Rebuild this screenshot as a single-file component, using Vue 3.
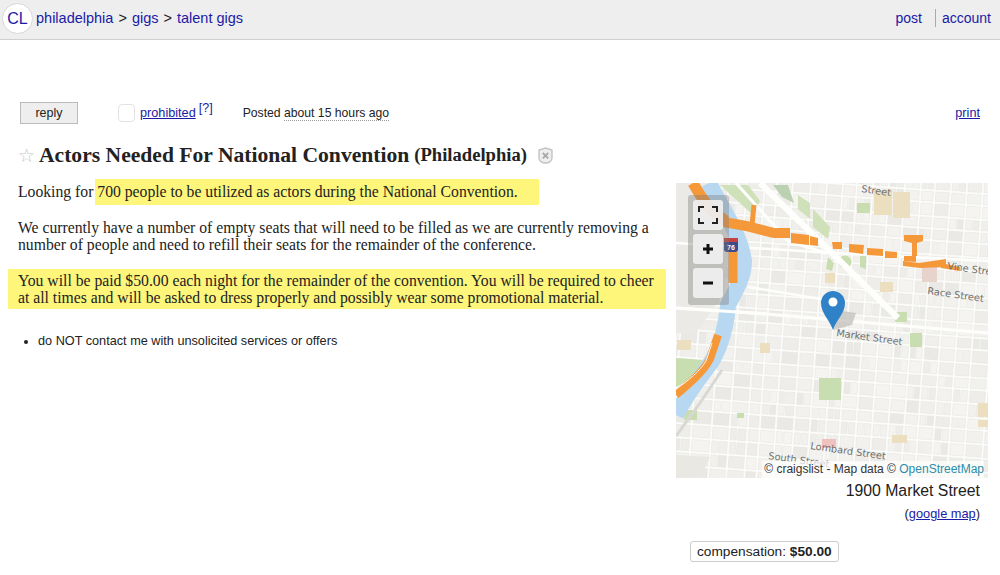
<script setup>
const xs = [-40,-18,6,24,44,62,80,92,108,126,142,158,172,188,204,220,236,250,266,282,298,316,334]
const ys = [-30,-14,2,14,28,40,52,66,80,92,106,118,132,146,158,172,186,198,212,226,238,252,266,280,294,310]
const tones = ['#f3f2ef','#f0efec','#f5f4f1','#eeede9','#f2f1ed','#eae9e5']
const blocks = []
let seed = 7
const rnd = () => { seed = (seed * 16807) % 2147483647; return seed / 2147483647 }
for (let i = 0; i < xs.length - 1; i++) {
  for (let j = 0; j < ys.length - 1; j++) {
    const w = xs[i + 1] - xs[i] - 2.5
    const h = ys[j + 1] - ys[j] - 2.5
    const fill = tones[Math.floor(rnd() * tones.length)]
    if (rnd() < 0.35 && w > 10) {
      const a = Math.floor(w * 0.45)
      blocks.push({ x: xs[i], y: ys[j], w: a, h, fill })
      blocks.push({ x: xs[i] + a + 1.2, y: ys[j], w: w - a - 1.2, h, fill: tones[Math.floor(rnd() * tones.length)] })
    } else {
      blocks.push({ x: xs[i], y: ys[j], w, h, fill })
    }
  }
}
const tan = [[198,7,18,25],[217,9,17,26],[149,90,10,10],[204,99,13,10],[1,157,14,10],[84,160,10,10],[302,220,10,14],[302,237,10,7],[216,252,15,8]]
const green = [[143,195,22,22],[61,230,7,5],[181,20,13,10],[219,129,12,10],[234,150,12,14],[8,227,13,10]]
</script>

<template>
  <div class="page">
    <header class="top">
      <nav class="crumbs">
        <span class="logo">CL</span>
        <a class="nav">philadelphia</a><span class="sep">&gt;</span>
        <a class="nav">gigs</a><span class="sep">&gt;</span>
        <a class="nav">talent gigs</a>
      </nav>
      <nav class="user">
        <a class="nav">post</a>
        <a class="nav acct">account</a>
      </nav>
    </header>

    <div class="tools">
      <button class="reply">reply</button>
      <span class="check"></span>
      <a class="link proh">prohibited</a>
      <sup class="help">[?]</sup>
      <span class="posted">Posted <span class="ago">about 15 hours ago</span></span>
      <a class="link print">print</a>
    </div>

    <h1 class="title">
      <span class="star">☆</span>
      <span>Actors Needed For National Convention</span>
      <small>(Philadelphia)</small>
      <svg class="hide" width="17" height="17" viewBox="0 0 17 17">
        <path d="M8.500 1 L15 3 V11 C15 14 12 16 8.500 16 C5 16 2 14 2 11 V3 Z" fill="#eeeeee" stroke="#c4c4c4" stroke-width="1.400"/>
        <path d="M5.800 6 L11.200 11.400 M11.200 6 L5.800 11.400" stroke="#a9a9a9" stroke-width="1.800" fill="none"/>
      </svg>
    </h1>

    <main class="content">
      <section class="posting">
        <p class="first">Looking for <mark class="hl-inline">700 people to be utilized as actors during the National Convention.</mark></p>
        <p>We currently have a number of empty seats that will need to be filled as we are currently removing a<br>number of people and need to refill their seats for the remainder of the conference.</p>
        <p class="hl-block">You will be paid $50.00 each night for the remainder of the convention. You will be required to cheer<br>at all times and will be asked to dress properly and possibly wear some promotional material.</p>
        <ul class="notices"><li>do NOT contact me with unsolicited services or offers</li></ul>
      </section>

      <aside class="side">
        <div class="map">
          <svg class="tiles" width="312" height="295" viewBox="0 0 312 295">
            <rect width="312" height="295" fill="#fcfcfb"/>
            <g transform="rotate(4 156 147)">
              <rect v-for="(b, i) in blocks" :key="i" :x="b.x" :y="b.y" :width="b.w" :height="b.h" :fill="b.fill" stroke="#e4e3de" stroke-width=".5"/>
            </g>
            <rect v-for="(t, i) in tan" :key="'t' + i" :x="t[0]" :y="t[1]" :width="t[2]" :height="t[3]" fill="#ecdfc0"/>
            <rect v-for="(g, i) in green" :key="'g' + i" :x="g[0]" :y="g[1]" :width="g[2]" :height="g[3]" fill="#c9deb0"/>
            <!-- west bank and parks -->
            <path d="M0 0 H30 L56 40 L48 110 L20 150 H0 Z" fill="#ebeae6"/>
            <path d="M0 295 L0 272 L34 274 L24 295 Z" fill="#e9e8e3"/>
            <path d="M0 175 L27 177 L12 198 L0 204 Z" fill="#c9deb0"/>
            <path d="M44 2 H72 L84 18 L77 32 Z M122 12 L134 20 L134 36 L122 26 Z M137 26 L154 44 L152 56 L137 44 Z" fill="#cfe1b8"/>
            <path d="M97 2 H112 L118 20 L106 14 Z" fill="#bcd1b2"/>
            <circle cx="169" cy="79" r="6.500" fill="#c9deb0"/>
            <path d="M152 74 L158 80 L156 88 L150 86 Z M184 73 L190 72 L190 86 L184 84 Z" fill="#c9deb0"/>
            <rect x="246" y="84" width="15" height="15" fill="#e8d2cc"/>
            <rect x="146" y="256" width="14" height="9" fill="#efc2c0"/>
            <!-- main roads -->
            <g fill="none" stroke="#fefefd">
              <path d="M84 0 L156 70 L222 135" stroke-width="6"/>
              <path d="M60 0 L112 58 L150 70" stroke-width="3"/>
              <path d="M0 125 L90 131 L312 150" stroke-width="3"/>
              <path d="M72 104 L170 120" stroke-width="2.500"/>
              <path d="M0 60 L156 70 L312 78" stroke-width="2.500"/>
            </g>
            <!-- river -->
            <path d="M33 0 C46 26 64 50 68 78 C68 96 58 110 52 122 C50 146 44 164 36 178 C26 192 12 208 0 232" fill="none" stroke="#b8d8f1" stroke-width="16"/>
            <path d="M0 253 L24 220 L46 187" fill="none" stroke="#d9d8d3" stroke-width="3"/>
            <path d="M0 125 L90 131" fill="none" stroke="#fefefd" stroke-width="3"/>
            <!-- highways -->
            <g fill="none" stroke="#f5983a">
              <path d="M17 0 C26 16 34 28 50 38" stroke-width="11"/>
              <path d="M48 39 L70 43 L98 50 L114 50" stroke-width="10"/>
              <path d="M78 22 L76 42" stroke-width="5"/>
              <path d="M57 62 L57 100" stroke-width="9"/>
              <path d="M42 152 L34 176 C28 188 14 200 0 212" stroke-width="8"/>
            </g>
            <path d="M36 160 L30 178 C24 188 12 198 0 206" fill="none" stroke="#fbf6ea" stroke-width="1"/>
            <g fill="#f5983a">
              <path d="M115 50 L133 52 L133 62 L115 60 Z"/>
              <path d="M134 53 L142 55 L142 63 L134 62 Z"/>
              <path d="M156 59 L166 59 L166 66 L157 66 Z"/>
              <path d="M173 61 L188 62 L187 71 L173 69 Z"/>
              <path d="M191 65 L207 66 L207 73 L191 72 Z"/>
              <path d="M209 68 L221 69 L221 75 L209 75 Z"/>
              <path d="M228 52 H247 L247 58 L241 60 L241 73 H236 L236 60 L228 58 Z"/>
              <path d="M228 73 H240 L240 79 L228 78 Z M227 78 L243 80 L270 76 L270 84 L244 85 L227 83 Z"/>
              <path d="M265 80 L284 84 L284 88 L265 85 Z"/>
            </g>
            <g>
              <rect x="48" y="55" width="14" height="14" rx="3" fill="#3f4a8a"/>
              <rect x="48" y="55" width="14" height="4" fill="#c9413d"/>
              <text x="55" y="67" class="shield">76</text>
            </g>
            <g class="labels">
              <text x="271" y="86" transform="rotate(8 271 86)">Vine Street</text>
              <text x="251" y="111" transform="rotate(8 251 111)">Race Street</text>
              <text x="160" y="153" transform="rotate(8 160 153)">Market Street</text>
              <text x="134" y="266" transform="rotate(8 134 266)">Lombard Street</text>
              <text x="92" y="276" transform="rotate(8 92 276)">South Street</text>
              <text x="185" y="9" transform="rotate(8 185 9)">Street</text>
            </g>
            <!-- pin -->
            <path d="M157 147 L166 128 L180 130 L176 142 Z" fill="#bdbcb8" opacity=".7"/>
            <path d="M157 147 C153 136 145 130 145 120 A12 12 0 0 1 169 120 C169 130 161 136 157 147 Z" fill="#2f82c7"/>
            <circle cx="157" cy="119" r="4.500" fill="#fff"/>
          </svg>

          <div class="controls">
            <button class="ctl">
              <svg width="20" height="18" viewBox="0 0 20 18" fill="none" stroke="#222" stroke-width="2">
                <path d="M1 6 V1 H6 M14 1 H19 V6 M19 12 V17 H14 M6 17 H1 V12"/>
              </svg>
            </button>
            <button class="ctl"><svg width="10" height="10" viewBox="0 0 10 10"><path d="M5 0 V10 M0 5 H10" stroke="#111" stroke-width="3"/></svg></button>
            <button class="ctl"><svg width="10" height="10" viewBox="0 0 10 10"><path d="M0 5 H10" stroke="#111" stroke-width="3"/></svg></button>
          </div>
          <div class="attr">© craigslist - Map data © <span class="osm">OpenStreetMap</span></div>
        </div>
        <div class="addr">1900 Market Street</div>
        <div class="gmap">(<a class="link">google map</a>)</div>
        <div class="comp">compensation: <b>$50.00</b></div>
      </aside>
    </main>
  </div>
</template>

<style>
html, body { margin: 0; background: #fff; }
</style>

<style scoped>
.page { width: 1000px; height: 575px; overflow: hidden; font-family: "Liberation Sans", Arial, sans-serif; color: #222; }
.top { background: #eeeeee; border-bottom: 1px solid #cfcfcf; display: flex; justify-content: space-between; align-items: center; padding: 0 9px 3px 2px; height: 36px; }
.crumbs { display: flex; align-items: center; font-size: 14.5px; }
.logo { width: 29px; height: 29px; border-radius: 50%; background: #fff; border: 1px solid #d8d8d8; color: #1a1aa6; display: flex; align-items: center; justify-content: center; font-size: 16px; margin-right: 3px; margin-top: 1px; }
.nav { color: #1a1aa6; }
.sep { color: #222; margin: 0 5px; }
.user { display: flex; align-items: center; font-size: 14px; }
.acct { border-left: 1px solid #aaa; margin-left: 13px; padding: 1px 0 1px 6px; }

.tools { display: flex; align-items: center; height: 22px; margin-top: 62px; padding-left: 20px; font-size: 12.7px; }
.reply { width: 58px; height: 22px; padding: 0; background: #eeeeee; border: 1px solid #bbb; font: 12.5px "Liberation Sans", Arial, sans-serif; color: #222; }
.check { width: 15px; height: 16px; background: #fff; border: 1px solid #e2e2e2; border-radius: 4px; margin-left: 40px; }
.link { color: #1a1aa6; text-decoration: underline; }
.proh { margin-left: 5px; }
.help { font-size: 12.5px; color: #1a1aa6; margin: -10px 0 0 3px; line-height: 1; }
.posted { margin-left: 30px; font-size: 12.2px; }
.ago { border-bottom: 1px dotted #999; }
.print { margin-left: auto; margin-right: 20px; }

.title { display: flex; align-items: center; margin: 19px 0 0 18px; height: 24px; font: bold 21.6px "Liberation Serif", "Times New Roman", serif; color: #222; white-space: nowrap; }
.star { width: 21px; font-size: 19px; font-weight: normal; color: #c4c4c4; font-family: "DejaVu Sans", sans-serif; }
.title small { font-size: 18.6px; margin-left: 5px; }
.hide { margin-left: 10px; }

.content { display: flex; margin-top: 16px; }
.posting { width: 658px; margin-left: 8px; font: 15.7px/17px "Liberation Serif", "Times New Roman", serif; color: #222; white-space: nowrap; }
.posting p { margin: 0 0 19px; padding-left: 10px; }
.posting .first { height: 17px; padding-top: 5px; margin-bottom: 19px; margin-top: -5px; }
.hl-inline { background: #fdf67a; color: inherit; padding: 4px 21px 5px 2px; margin-left: -2px; }
.hl-block { background: #fdf67a; padding-top: 3px; padding-bottom: 3px; margin-top: -3px !important; margin-bottom: 16px !important; border-radius: 1px; }
.notices { margin: 24px 0 0; padding: 0 0 0 30px; font: 12.7px/17px "Liberation Sans", Arial, sans-serif; }

.side { width: 312px; margin-left: 10px; }
.map { position: relative; width: 312px; height: 295px; overflow: hidden; }
.tiles { display: block; }
.shield { font: bold 7px "Liberation Sans", sans-serif; fill: #fff; text-anchor: middle; }
.labels text { font: 9.8px "DejaVu Sans", sans-serif; fill: #6f6f6f; }
.controls { position: absolute; left: 12px; top: 12px; width: 41px; padding: 5px 0 7px 5px; box-sizing: border-box; height: 110px; background: rgba(120,120,120,.38); border-radius: 3px; display: flex; flex-direction: column; gap: 4px; }
.ctl { width: 30px; height: 30px; padding: 0; background: rgba(240,240,240,.92); border: 0; border-radius: 3px; display: flex; align-items: center; justify-content: center; }
.attr { position: absolute; right: 4px; bottom: 0; padding: 0 0 0 2px; height: 17px; line-height: 17px; font-size: 12px; color: #333; background: rgba(255,255,255,.7); white-space: nowrap; }
.osm { color: #2a8da8; }
.addr { text-align: right; padding-right: 8px; font-size: 15.8px; margin-top: 4px; line-height: 18px; }
.gmap { text-align: right; padding-right: 8px; font-size: 12.8px; line-height: 16px; margin-top: 6px; }
.comp { display: inline-block; box-sizing: border-box; height: 21px; line-height: 19px; margin: 19px 0 0 14px; padding: 0 6px; border: 1px solid #ccc; border-radius: 3px; font-size: 13.7px; white-space: nowrap; }
</style>
